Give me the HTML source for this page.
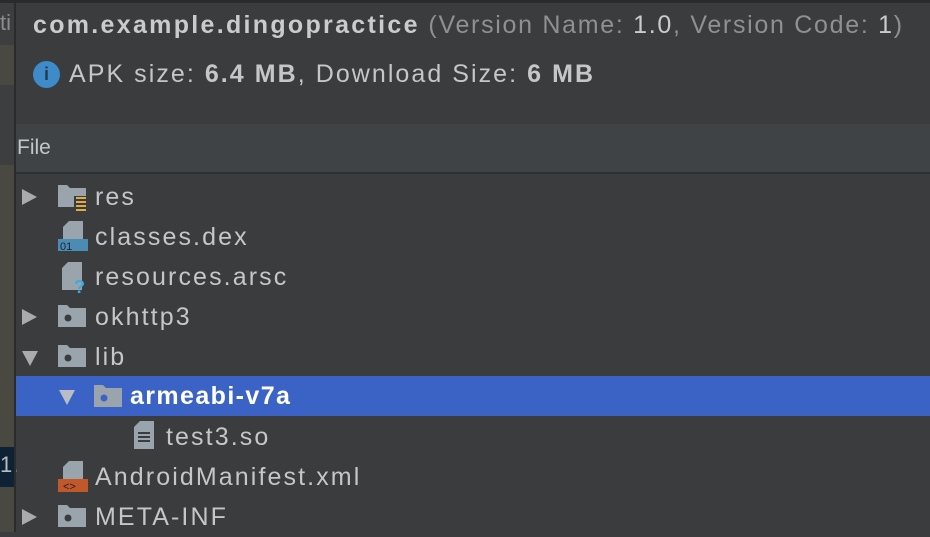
<!DOCTYPE html>
<html><head><style>
body{margin:0;width:930px;height:532px;overflow:hidden;background:#3b3c3e;font-family:"Liberation Sans",sans-serif;position:relative}
.a{position:absolute}
.row{position:absolute;left:16px;right:0;height:40px}
.t{position:absolute;top:6px;font-size:25px;color:#c4c6c8;letter-spacing:2.1px;white-space:nowrap}
.arr{position:absolute;top:12px;width:0;height:0}
.r{border-top:8px solid transparent;border-bottom:8px solid transparent;border-left:15px solid #a9abad}
.d{border-left:8px solid transparent;border-right:8px solid transparent;border-top:15px solid #a9abad;top:14px}
</style></head><body>
<div class="a" style="left:0;top:0;width:930px;height:3px;background:#2b2b2b"></div>
<div class="a" style="left:0;top:3px;width:14px;height:529px;background:#4a4941"></div>
<div class="a" style="left:0;top:3px;width:14px;height:42px;background:#3c3e40"></div>
<div class="a" style="left:0;top:85px;width:14px;height:80px;background:#3c3e40"></div>
<div class="a" style="left:0;top:447px;width:14px;height:40px;background:#0e2235"></div>
<div class="a" style="left:0;top:10px;font-size:22px;color:#8a8c8e">ti</div>
<div class="a" style="left:0;top:452px;font-size:22px;color:#b8bcc0">1.</div>
<div class="a" style="left:14px;top:3px;width:2px;height:529px;background:#2b2b2b"></div>
<div class="a" style="left:33px;top:11px;font-size:25px;white-space:nowrap;color:#8e9092;letter-spacing:1.7px"><b style="color:#c9cbcd;letter-spacing:2.3px">com.example.dingopractice</b> (Version Name: <span style="color:#c9cbcd">1.0</span>, Version Code: <span style="color:#c9cbcd">1</span>)</div>
<div class="a" style="left:33px;top:61px;width:27px;height:27px;border-radius:50%;background:#3d8bc9;font-weight:bold;font-size:18px;text-align:center;line-height:27px;color:#2a3a4a">i</div>
<div class="a" style="left:69px;top:60px;font-size:25px;white-space:nowrap;color:#c4c6c8;letter-spacing:2.05px">APK size: <b>6.4 MB</b>, Download Size: <b>6 MB</b></div>
<div class="a" style="left:16px;top:124px;width:914px;height:48px;background:#404346"></div>
<div class="a" style="left:16px;top:172px;width:914px;height:2px;background:#2e2f31"></div>
<div class="a" style="left:17px;top:136px;font-size:21px;color:#c4c6c8">File</div>

<div class="row" style="top:177px"><div class="arr r" style="left:6px"></div>
<svg class="a" style="left:42px;top:6px" width="30" height="30"><path d="M0 2h9l3 3h16v19H0z" fill="#9aa4ad"/><rect x="16" y="13" width="12" height="15" fill="#3b3c3e"/><g fill="#e0a94a"><rect x="18" y="14" width="10" height="2"/><rect x="18" y="18" width="10" height="2"/><rect x="18" y="22" width="10" height="2"/><rect x="18" y="26" width="10" height="2"/></g></svg>
<div class="t" style="left:79px">res</div></div>

<div class="row" style="top:217px">
<svg class="a" style="left:42px;top:4px" width="30" height="32"><path d="M5 0h20v20H5z" fill="#9aa4ad"/><path d="M5 0h6v6H5z" fill="#3b3c3e"/><path d="M11 0v6H5z" fill="#9aa4ad"/><rect x="0" y="18" width="30" height="12" fill="#4a8cb3"/><text x="2" y="29" font-size="11" fill="#223" font-family="Liberation Sans">01</text></svg>
<div class="t" style="left:79px">classes.dex</div></div>

<div class="row" style="top:257px">
<svg class="a" style="left:42px;top:5px" width="30" height="32"><path d="M4 0h20v28H4z" fill="#9aa4ad"/><path d="M4 0h6v6H4z" fill="#3b3c3e"/><path d="M10 0v6H4z" fill="#9aa4ad"/><text x="16" y="31" font-size="18" font-weight="bold" fill="#40a8e0" font-family="Liberation Sans">?</text></svg>
<div class="t" style="left:79px">resources.arsc</div></div>

<div class="row" style="top:297px"><div class="arr r" style="left:6px"></div>
<svg class="a" style="left:42px;top:6px" width="30" height="28"><path d="M0 2h9l3 3h16v19H0z" fill="#9aa4ad"/><circle cx="10" cy="15" r="3.5" fill="#3b3c3e"/></svg>
<div class="t" style="left:79px">okhttp3</div></div>

<div class="row" style="top:337px"><div class="arr d" style="left:6px"></div>
<svg class="a" style="left:42px;top:6px" width="30" height="28"><path d="M0 2h9l3 3h16v19H0z" fill="#9aa4ad"/><circle cx="10" cy="15" r="3.5" fill="#3b3c3e"/></svg>
<div class="t" style="left:79px">lib</div></div>

<div class="row" style="top:376px;background:#3b63c6"><div class="arr d" style="left:43px;border-top-color:#b9bdc6"></div>
<svg class="a" style="left:78px;top:7px" width="30" height="28"><path d="M0 2h9l3 3h16v19H0z" fill="#9aa4ad"/><circle cx="10" cy="15" r="3.5" fill="#3b63c6"/></svg>
<div class="t" style="left:114px;color:#fff;font-weight:bold;letter-spacing:1.4px">armeabi-v7a</div></div>

<div class="row" style="top:417px">
<svg class="a" style="left:118px;top:4px" width="22" height="30"><path d="M0 0h20v28H0z" fill="#9aa4ad"/><path d="M0 0h6v6H0z" fill="#3b3c3e"/><path d="M6 0v6H0z" fill="#9aa4ad"/><g fill="#3b3c3e"><rect x="4" y="11" width="12" height="2"/><rect x="4" y="15" width="12" height="2"/><rect x="4" y="19" width="12" height="2"/></g></svg>
<div class="t" style="left:150px">test3.so</div></div>

<div class="row" style="top:457px">
<svg class="a" style="left:42px;top:4px" width="30" height="32"><path d="M5 0h20v20H5z" fill="#9aa4ad"/><path d="M5 0h6v6H5z" fill="#3b3c3e"/><path d="M11 0v6H5z" fill="#9aa4ad"/><rect x="0" y="18" width="30" height="13" fill="#c0582a"/><text x="5" y="29" font-size="11" fill="#222" font-family="Liberation Sans">&lt;&gt;</text></svg>
<div class="t" style="left:79px">AndroidManifest.xml</div></div>

<div class="row" style="top:497px"><div class="arr r" style="left:6px"></div>
<svg class="a" style="left:42px;top:6px" width="30" height="28"><path d="M0 2h9l3 3h16v19H0z" fill="#9aa4ad"/><circle cx="10" cy="15" r="3.5" fill="#3b3c3e"/></svg>
<div class="t" style="left:79px">META-INF</div></div>
</body></html>
